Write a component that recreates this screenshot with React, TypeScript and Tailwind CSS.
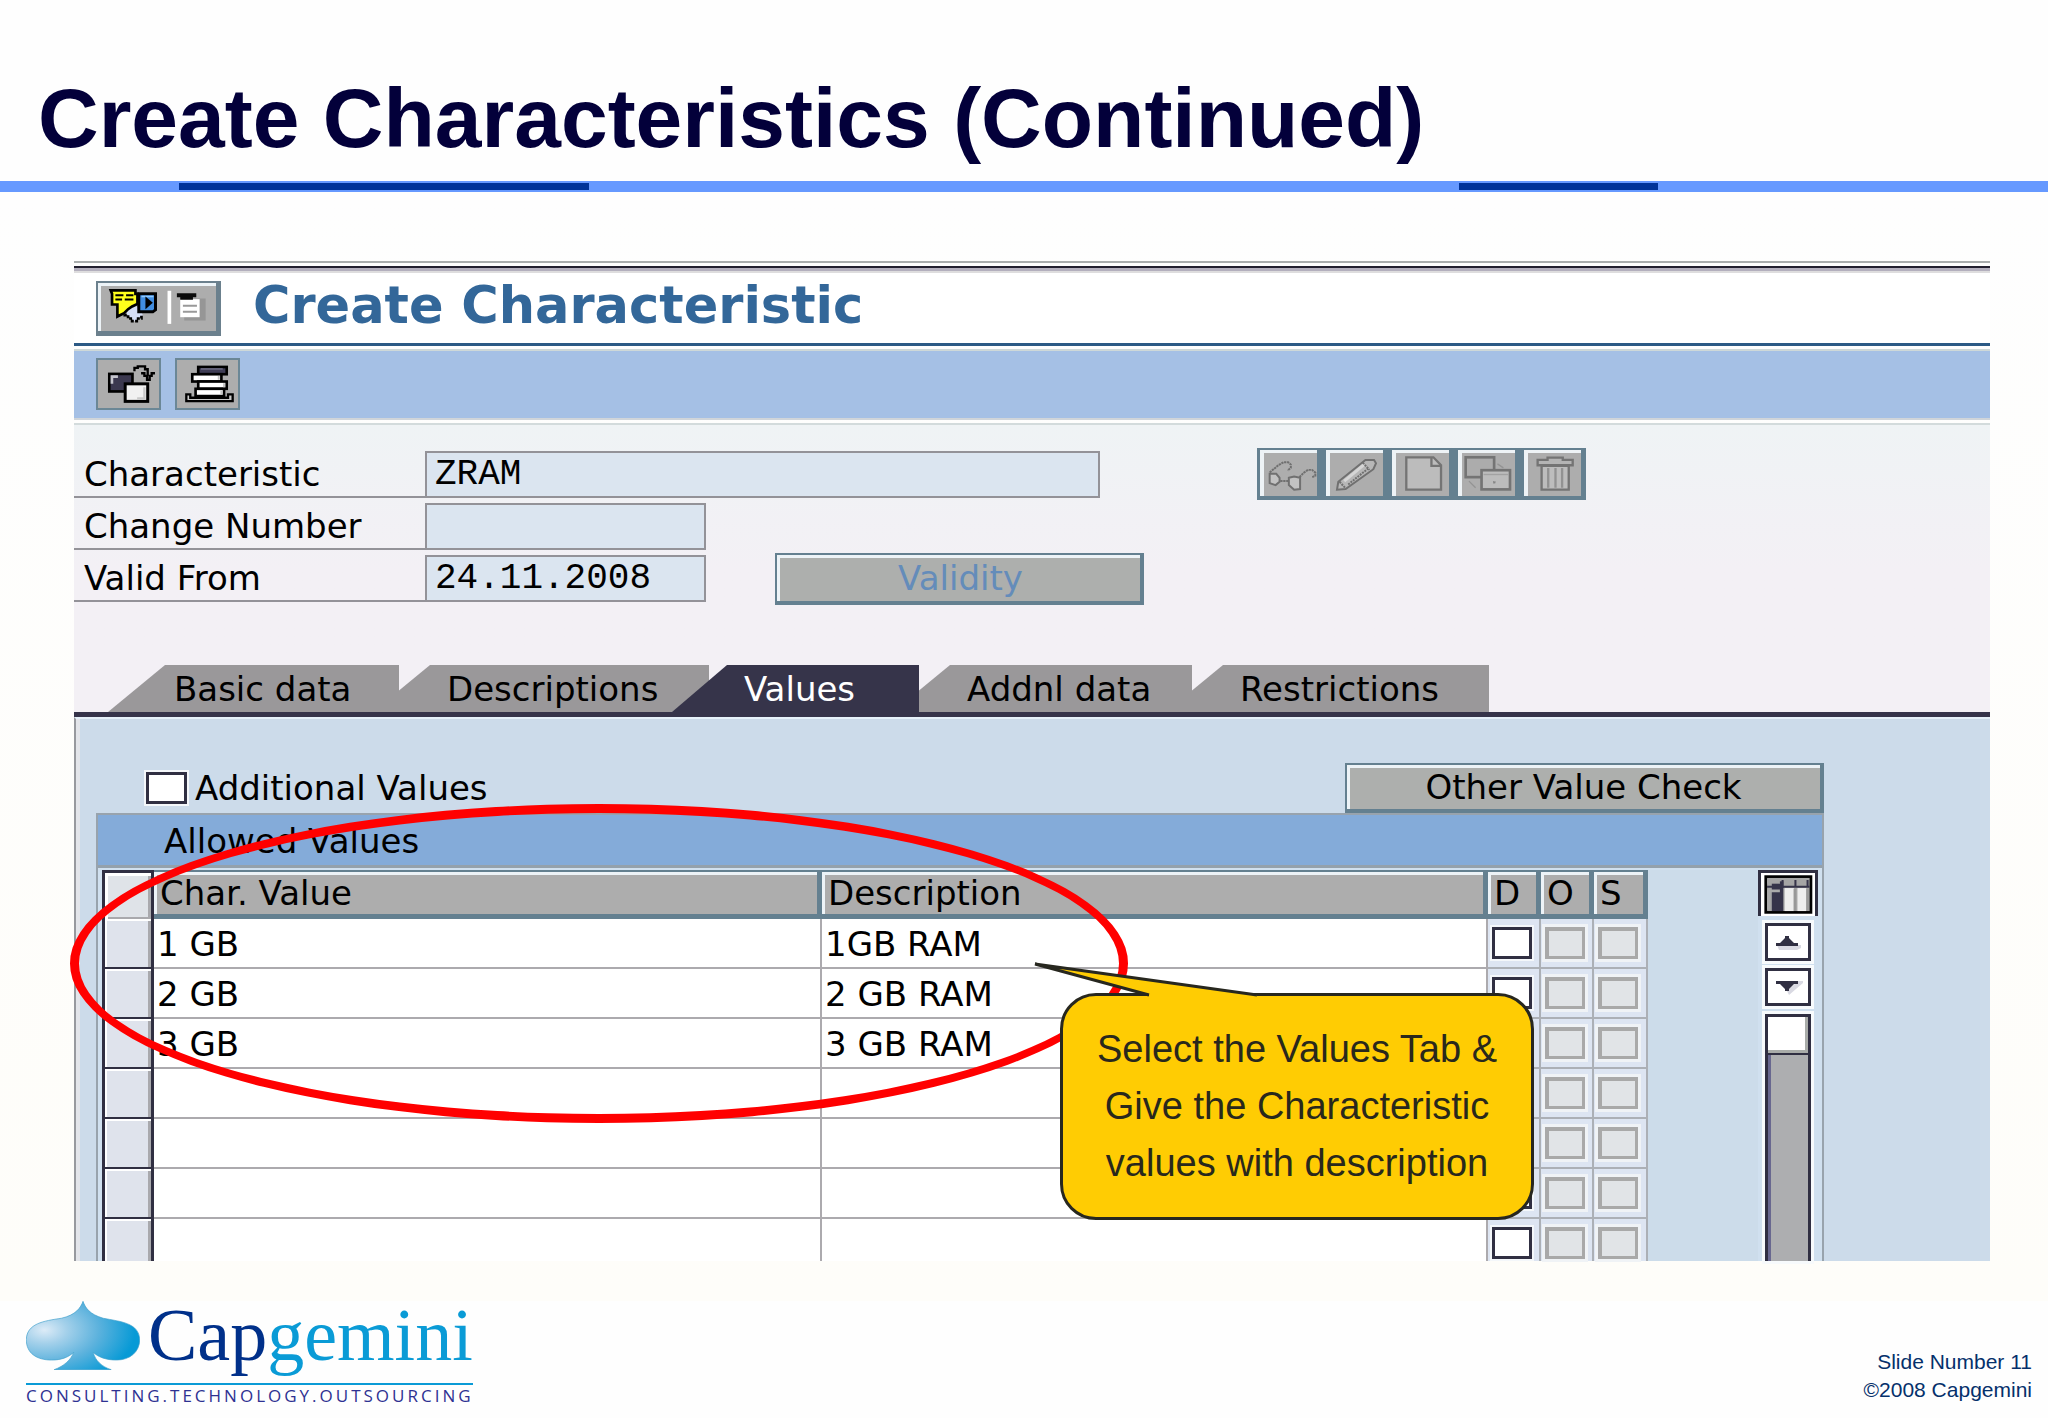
import React from "react";

const sans = "font-['DejaVu_Sans',sans-serif]";
const raised =
  "border-t-2 border-l-2 border-r-4 border-b-4 border-[#648090] bg-[#adafad] shadow-[inset_3px_3px_0_#edf3f7]";

function MenuIcon() {
  return (
    <svg viewBox="24 24 353 143" className="block h-12 w-[118px]" aria-hidden="true">
      <path d="M104 104 L128 84 L152 104 L158 120 L134 138 L114 122 Z" fill="#d5def6" />
      <path d="M104 104 V120 H114 V130 H126 V138 H144 V130 H154 V120" fill="none" stroke="#000" strokeWidth="8" strokeDasharray="9 4" />
      <path d="M62 46 H136 V56 H142 V86 L126 94 L114 102 L102 114 L82 124 V88 H66 V56 Z" fill="#ffff1c" stroke="#000" strokeWidth="8" />
      <path d="M76 60 H100 M108 60 H130 M76 73 H96 M104 73 H130" stroke="#000" strokeWidth="6" />
      <path d="M146 56 H196 V104 L188 110 H146 Z" fill="#418de0" stroke="#000" strokeWidth="9" />
      <path d="M154 64 H190" stroke="#8ec9ff" strokeWidth="5" />
      <path d="M166 64 L188 83 L166 102 Z" fill="#000" />
      <rect x="232" y="47" width="11" height="99" fill="#fff" />
      <rect x="282" y="70" width="64" height="66" fill="#969696" />
      <path d="M270 72 H328 V126 H270 Z" fill="#fff" />
      <path d="M278 92 H320 M278 110 H320" stroke="#999" strokeWidth="6" />
      <path d="M260 54 H318 V66 H308 V74 H270 V66 H260 Z" fill="#0a0a0a" />
    </svg>
  );
}

function CopyFromIcon() {
  return (
    <svg viewBox="24 256 184 145" className="block h-12 w-[61px]" aria-hidden="true">
      <rect x="58" y="298" width="70" height="53" fill="#3b384f" stroke="#000" strokeWidth="8" />
      <path d="M66 328 V306 H84" fill="none" stroke="#c4c4cc" strokeWidth="8" />
      <rect x="106" y="328" width="68" height="53" fill="#f1f1f1" stroke="#000" strokeWidth="9" />
      <path d="M164 338 V372 H142" fill="none" stroke="#c9c9c9" strokeWidth="7" />
      <path d="M134 290 V280 H144 V275 H166 V284 H174 V304" fill="none" stroke="#000" strokeWidth="7" />
      <path d="M154 296 H164 V304 H172 V316 H180 V304 H186 V296 H196" fill="none" stroke="#000" strokeWidth="7" />
    </svg>
  );
}

function StackIcon() {
  return (
    <svg viewBox="258 256 184 145" className="block h-12 w-[61px]" aria-hidden="true">
      <path d="M298 360 H286 V380 H426 V360 H412 V370 H298 Z" fill="#c9c9c9" stroke="#000" strokeWidth="7" />
      <g stroke="#000" strokeWidth="8">
        <rect x="322" y="277" width="86" height="22" fill="#3f3d55" />
        <rect x="304" y="299" width="88" height="22" fill="#fff" />
        <rect x="322" y="321" width="86" height="22" fill="#fff" />
        <rect x="314" y="343" width="86" height="22" fill="#fff" />
      </g>
      <path d="M330 283 H396" stroke="#77758c" strokeWidth="4" />
      <path d="M384 304 V316 M400 326 V338 M392 348 V360" stroke="#c4c4c4" strokeWidth="6" />
    </svg>
  );
}

const disabledIcons: { name: string; view: string; art: React.ReactNode }[] = [
  {
    name: "Display",
    view: "131 97 160 130",
    art: (
      <g fill="none" stroke="#707070" strokeWidth="6">
        <path d="M148 160 H168 L178 172 V184 L166 194 L148 188 Z" fill="#c2c2c2" />
        <path d="M206 172 L222 168 L240 172 V206 L222 208 L206 194 Z" fill="#c2c2c2" />
        <path
          d="M180 182 H204 M148 156 L174 134 L190 125 H204 L212 132 V142 L202 150 M238 170 L252 156 L264 148 H276 L286 156 V166 L276 170"
          strokeDasharray="7 2"
        />
      </g>
    ),
  },
  {
    name: "Change",
    view: "329 97 160 130",
    art: (
      <g stroke="#707070" strokeWidth="6">
        <path d="M350 208 L354 184 L436 118 H462 L468 128 L460 146 L376 206 Z" fill="#b7b7b7" />
        <path d="M372 182 L432 132" stroke="#d6d6d6" strokeWidth="9" />
        <path d="M384 192 L444 144 M358 184 L376 204 M428 126 L448 148" fill="none" strokeDasharray="6 3" />
      </g>
    ),
  },
  {
    name: "Create",
    view: "527 97 160 130",
    art: (
      <g stroke="#747474" strokeWidth="7">
        <path d="M558 110 H640 L663 134 V208 H558 Z" fill="#bcbcbc" />
        <path d="M634 112 V136 H662" fill="none" />
      </g>
    ),
  },
  {
    name: "Copy",
    view: "725 97 160 130",
    art: (
      <g stroke="#747474" strokeWidth="8">
        <rect x="736" y="110" width="86" height="60" fill="#acacac" />
        <path d="M746 182 L766 202 M832 130 L850 142" stroke="#949494" strokeWidth="4" />
        <rect x="784" y="149" width="86" height="58" fill="#bcbcbc" />
        <path d="M790 162 H866" stroke="#a2a2a2" strokeWidth="4" />
        <rect x="820" y="184" width="5" height="4" fill="#888" strokeWidth="1" />
      </g>
    ),
  },
  {
    name: "Delete",
    view: "923 97 160 130",
    art: (
      <g stroke="#747474" strokeWidth="7">
        <path d="M964 136 H1046 V208 H964 Z" fill="#bdbdbd" />
        <path d="M984 142 V202 M1006 142 V202 M1026 142 V202" stroke="#929292" />
        <path d="M952 118 H982 V111 H1028 V118 H1058 V134 H952 Z" fill="#b4b4b4" />
      </g>
    ),
  },
];

const fields = [
  { id: "characteristic", label: "Characteristic", value: "ZRAM", width: "w-[675px]" },
  { id: "change-number", label: "Change Number", value: "", width: "w-[281px]" },
  { id: "valid-from", label: "Valid From", value: "24.11.2008", width: "w-[281px]" },
];

const tabs = [
  { label: "Basic data", look: "w-[291px] pl-[66px] bg-[#9a989a] [clip-path:polygon(57px_0,100%_0,100%_100%,0_100%)]" },
  { label: "Descriptions", look: "w-[310px] pl-12 bg-[#9a989a] [clip-path:polygon(0_54%,31px_0,100%_0,100%_100%,0_100%)]" },
  { label: "Values", look: "-ml-[37px] w-[247px] pl-[72px] bg-[#36344a] text-white [clip-path:polygon(55px_0,100%_0,100%_100%,0_100%)]" },
  { label: "Addnl data", look: "w-[273px] pl-12 bg-[#9a989a] [clip-path:polygon(0_54%,31px_0,100%_0,100%_100%,0_100%)]" },
  { label: "Restrictions", look: "w-[297px] pl-12 bg-[#9a989a] [clip-path:polygon(0_54%,31px_0,100%_0,100%_100%,0_100%)]" },
];

const rows = [
  ["1 GB", "1GB RAM"],
  ["2 GB", "2 GB RAM"],
  ["3 GB", "3 GB RAM"],
  ["", ""],
  ["", ""],
  ["", ""],
  ["", ""],
];

const th =
  "h-[49px] border-t-2 border-r-[5px] border-b-[5px] border-[#648090] bg-[#adadad] p-0 pl-1.5 text-left font-normal shadow-[inset_3px_3px_0_#edf3f7]";

function Form() {
  return (
    <div className="flex bg-linear-to-b from-[#eff3f5] to-[#f3f0f5] to-60%">
      <div className="flex w-[1070px] flex-col gap-[5px] pt-[26px] pb-[63px]">
        {fields.map((f) => (
          <div key={f.id} className="flex h-[47px] items-center">
            <label htmlFor={f.id} className="flex h-full w-[351px] items-center border-b-2 border-[#939298] pl-2.5">
              {f.label}
            </label>
            <input
              id={f.id}
              defaultValue={f.value}
              className={`${f.width} h-full border-2 border-[#939298] bg-[#dbe5f0] px-2 font-['Liberation_Mono',monospace] text-4xl outline-none`}
            />
            {f.id === "valid-from" && (
              <button className={`${raised} ml-auto h-[52px] w-[369px] shrink-0 pl-1 leading-none text-[#648cba]`}>Validity</button>
            )}
          </div>
        ))}
      </div>
      <div className="mt-[23px] ml-[113px] flex gap-[9px] self-start bg-[#648090] pt-0.5 pr-[5px] pb-1 pl-[3px]">
        {disabledIcons.map((b) => (
          <button key={b.name} aria-label={b.name} className="h-[46px] w-[57px] border-t-[3px] border-l-4 border-[#eef3f6] bg-[#adadad]">
            <svg viewBox={b.view} className="block h-[43px] w-[53px]" aria-hidden="true">
              {b.art}
            </svg>
          </button>
        ))}
      </div>
    </div>
  );
}

function ValuesTable() {
  return (
    <table className="flex-1 table-fixed border-separate border-spacing-0">
      <colgroup>
        <col className="w-[52px]" />
        <col className="w-[668px]" />
        <col />
        <col className="w-[53px]" />
        <col className="w-[53px]" />
        <col className="w-[54px]" />
      </colgroup>
      <thead>
        <tr>
          <th
            aria-label="Select"
            className="border-t-[3px] border-r-[3px] border-l-[3px] border-[#302f42] bg-[#dfe3e8] p-0 shadow-[inset_3px_3px_0_#fff,inset_-3px_-2px_0_#a9a9ad]"
          />
          <th className={th}>Char. Value</th>
          <th className={th}>Description</th>
          <th className={th}>D</th>
          <th className={th}>O</th>
          <th className={th}>S</th>
        </tr>
      </thead>
      <tbody>
        {rows.map(([value, description], i) => {
          const last = i === rows.length - 1;
          const h = last ? "h-[42px]" : "h-[50px] border-b-2";
          return (
            <tr key={i}>
              <td className={`${h} border-r-[3px] border-l-[3px] border-[#302f42] bg-[#dfe3ec] p-0 shadow-[inset_2px_2px_0_#fff,inset_-3px_0_0_#a9a9ad]`} />
              <td className={`${h} border-r-2 border-[#acaaae] bg-white p-0 pt-0.5 pl-[3px]`}>{value}</td>
              <td className={`${h} border-r-2 border-[#acaaae] bg-white p-0 pt-0.5 pl-[3px]`}>{description}</td>
              {["D", "O", "S"].map((c) => (
                <td key={c} className={`${h} border-r-2 border-[#acb0b6] bg-[#dde5f2] p-0 pl-1 align-top`}>
                  {c === "D" ? (
                    <input
                      type="checkbox"
                      aria-label={`Row ${i + 1} default`}
                      className="mt-2 block h-8 w-10 appearance-none border-[3px] border-[#302f42] bg-white shadow-[0_0_0_2px_#f4f7fa]"
                    />
                  ) : (
                    <input
                      type="checkbox"
                      disabled
                      aria-label={`Row ${i + 1} ${c}`}
                      className="mt-2 block h-8 w-10 appearance-none border-t-4 border-r-[3px] border-b-[3px] border-l-4 border-[#a9a9a9] bg-[#e1e4e7] shadow-[0_0_0_3px_#f0f3f6]"
                    />
                  )}
                </td>
              ))}
            </tr>
          );
        })}
      </tbody>
    </table>
  );
}

function Scrollbar() {
  const box = "mx-[7px] flex h-[38px] items-center justify-center border-[3px] border-[#302f42] bg-white shadow-[0_0_0_3px_#f7fafc]";
  return (
    <div className="flex w-[60px] flex-col">
      <button aria-label="Table settings" className="h-[46px] border-[3px] border-b-0 border-[#302f42] bg-white">
        <svg viewBox="64 38 160 126" className="block h-[43px] w-[54px]" aria-hidden="true">
          <rect x="78" y="48" width="134" height="106" fill="#a5a5a5" stroke="#000" strokeWidth="8" />
          <rect x="96" y="62" width="34" height="88" fill="#36344a" />
          <path d="M86 146 V90 H120" fill="none" stroke="#aaa" strokeWidth="8" />
          <rect x="134" y="82" width="28" height="68" fill="#eee" />
          <rect x="172" y="82" width="26" height="68" fill="#eee" />
          <path d="M82 62 H120" stroke="#a5a5a5" strokeWidth="14" />
          <path d="M82 78 H208 M128 58 V82 M166 58 V78 M202 58 V78" stroke="#36344a" strokeWidth="6" />
          <path d="M164 84 V150 M202 84 V150" stroke="#999" strokeWidth="7" />
        </svg>
      </button>
      <button aria-label="Scroll up" className={`${box} mt-[7px]`}>
        <svg viewBox="0 0 32 18" className="h-[18px] w-8" aria-hidden="true">
          <path d="M5 12 H29 V15 L25 17 H7 Z" fill="#d9d9e2" />
          <path d="M4 13 V10 H8 L13 5 V3 H17 V5 L22 10 H26 V13 Z" fill="#302f42" />
        </svg>
      </button>
      <button aria-label="Scroll down" className={`${box} mt-[7px]`}>
        <svg viewBox="0 0 32 18" className="h-[18px] w-8" aria-hidden="true">
          <path d="M17 17 L31 5 V3 H26 L15 13 Z" fill="#d9d9e2" />
          <path d="M4 3 V6 H8 L13 11 V13 H17 V11 L22 6 H26 V3 Z" fill="#302f42" />
        </svg>
      </button>
      <div className="mx-[7px] mt-2 flex-1 border-x-[3px] border-t-[3px] border-[#302f42] bg-[#adaeb0] shadow-[0_0_0_3px_#f7fafc,inset_3px_0_0_#68678f]">
        <div className="h-9 border-r-[3px] border-b-[3px] border-[#a9aca9] bg-white shadow-[0_2px_0_#302f42]" />
      </div>
    </div>
  );
}

function Callout() {
  return (
    <div className="absolute top-[732px] left-[986px] flex h-[227px] w-[474px] items-center justify-center rounded-[36px] border-[3px] border-[#27271f] bg-[#ffcc03] text-center font-['Liberation_Sans',sans-serif] text-[38px] leading-[57px] whitespace-nowrap text-[#29281c]">
      <svg viewBox="0 0 230 40" className="absolute -top-[35px] -left-[30px] h-10 w-[230px]" aria-hidden="true">
        <path d="M2 3 L116 34 V40 H224 V34 Z" fill="#ffcc03" />
        <path d="M116 34 L2 3 L224 34" fill="none" stroke="#27271f" strokeWidth="3" />
      </svg>
      <p>
        Select the Values Tab &amp;
        <br />
        Give the Characteristic
        <br />
        values with description
      </p>
    </div>
  );
}

function Logo() {
  return (
    <div className="w-[447px]">
      <div className="flex h-[82px] items-start">
        <svg viewBox="78 92 342 208" className="h-[69px] w-[114px] shrink-0" aria-hidden="true">
          <defs>
            <radialGradient id="spade" cx="0.16" cy="0.42" r="0.8">
              <stop offset="0" stopColor="#dcebf7" />
              <stop offset="0.25" stopColor="#a3d0ea" />
              <stop offset="0.6" stopColor="#5cb2dd" />
              <stop offset="1" stopColor="#079ad6" />
            </radialGradient>
          </defs>
          <path
            d="M249 93 C256 112 268 132 310 144 C362 154 418 158 420 208 C420 246 390 270 350 270 C320 270 296 262 280 247 C286 272 306 290 334 299 H162 C192 288 212 270 221 247 C204 262 184 270 154 270 C110 270 78 250 78 208 C80 160 130 152 184 144 C228 134 242 112 249 93 Z"
            fill="url(#spade)"
            stroke="#3f9fcb"
            strokeWidth="2"
          />
        </svg>
        <span className="mt-1 ml-2 font-['Liberation_Serif',serif] text-[74px] leading-[60px] text-[#00308a]">
          Cap<span className="text-[#0a9bd6]">gemini</span>
        </span>
      </div>
      <p className="border-t-2 border-[#0a9bd6] font-['Open_Sans',sans-serif] text-[17px] leading-[22px] font-medium tracking-[3px] whitespace-nowrap text-[#2e3192]">
        CONSULTING.TECHNOLOGY.OUTSOURCING
      </p>
    </div>
  );
}

export default function App() {
  return (
    <div className="min-h-screen bg-[#fefefe]">
      <header>
        <h1 className="pt-[76px] pb-[21px] pl-[38px] font-['Liberation_Sans',sans-serif] text-[84px] leading-[84px] font-bold text-[#03003a]">
          Create Characteristics (Continued)
        </h1>
        <div className="flex h-[11px] bg-[#6699ff] py-0.5">
          <div className="ml-[8.75%] w-[20%] bg-[#003399]" />
          <div className="ml-[42.5%] w-[9.7%] bg-[#003399]" />
        </div>
      </header>

      <main className="bg-linear-to-b from-[#fefefe] to-[#fefdf9] pt-[69px] pr-[58px] pb-10 pl-[74px]">
        <section className={`${sans} relative text-[34px] leading-[34px] text-black`}>
          <div className="h-0.5 bg-[#a9adad]" />
          <div className="mt-[3px] h-0.5 bg-[#22202f]" />
          <div className="h-[3px] bg-[#b3afbd]" />
          <div className="h-0.5 bg-[#deddde]" />

          <div className="flex h-[70px] items-start gap-8 bg-white pt-2 pl-[22px]">
            <button
              aria-label="Menu"
              className="h-[55px] w-[125px] border-t-2 border-r-[5px] border-b-[5px] border-l-2 border-[#6b808d] bg-[#adadad] shadow-[inset_3px_3px_0_#edf3f7]"
            >
              <MenuIcon />
            </button>
            <h2 className="text-[51px] leading-[50px] font-bold text-[#336799]">Create Characteristic</h2>
          </div>
          <div className="h-[3px] bg-[#2c5a85]" />
          <div className="mt-[3px] h-0.5 bg-[#ced8d8]" />

          <div className="flex h-[67px] items-start gap-3.5 bg-[#a5c0e5] pt-[7px] pl-[22px]">
            <button aria-label="Copy from" className="h-[52px] border-2 border-[#6b8796] bg-[#adadad]">
              <CopyFromIcon />
            </button>
            <button aria-label="Stack" className="h-[52px] border-2 border-[#6b8796] bg-[#adadad]">
              <StackIcon />
            </button>
          </div>
          <div className="h-0.5 bg-[#d0d5da]" />
          <div className="mt-[3px] h-0.5 bg-[#d3dbdc]" />

          <Form />

          <nav role="tablist" className="flex h-[47px] bg-[#f3f0f5] pl-[34px]">
            {tabs.map((t) => (
              <button key={t.label} role="tab" aria-selected={t.label === "Values"} className={`${t.look} shrink-0 text-left`}>
                {t.label}
              </button>
            ))}
          </nav>
          <div className="h-[5px] bg-[#36344a]" />

          <div className="border-t-2 border-l-2 border-t-[#e6f1fa] border-l-[#97999e] bg-[#ccdbea] pt-11 pr-[166px] pl-5 shadow-[inset_4px_0_0_#e3e5ea]">
            <div className="flex h-[50px] items-center">
              <input
                id="additional-values"
                type="checkbox"
                className="ml-[50px] h-8 w-[41px] appearance-none border-[3px] border-[#302f42] bg-white shadow-[0_0_0_2px_#f4f7fa]"
              />
              <label htmlFor="additional-values" className="ml-2">
                Additional Values
              </label>
              <button className={`${raised} ml-auto h-full w-[479px]`}>Other Value Check</button>
            </div>

            <div className="border-t-2 border-r-2 border-l-2 border-[#98a3ad]">
              <h3 className="flex h-[53px] items-center border-b-[3px] border-[#94a1ac] bg-[#84abd9] pt-0.5 pl-[66px]">Allowed Values</h3>
              <div className="flex bg-[#d0e0ef] pt-0.5 pr-1 pl-1">
                <ValuesTable />
                <div className="w-[110px] bg-[#ccdcea]" />
                <Scrollbar />
              </div>
            </div>
          </div>

          <div className="pointer-events-none absolute top-[543px] -left-1 h-[319px] w-[1058px] rounded-[50%] border-[9px] border-[#ff0000]" />
          <Callout />
        </section>
      </main>

      <footer className="flex items-start justify-between pr-4 pl-[26px]">
        <Logo />
        <p className="pt-[47px] text-right font-['Liberation_Sans',sans-serif] text-[21px] leading-7 text-[#05306b]">
          Slide Number 11
          <br />
          ©2008 Capgemini
        </p>
      </footer>
    </div>
  );
}
